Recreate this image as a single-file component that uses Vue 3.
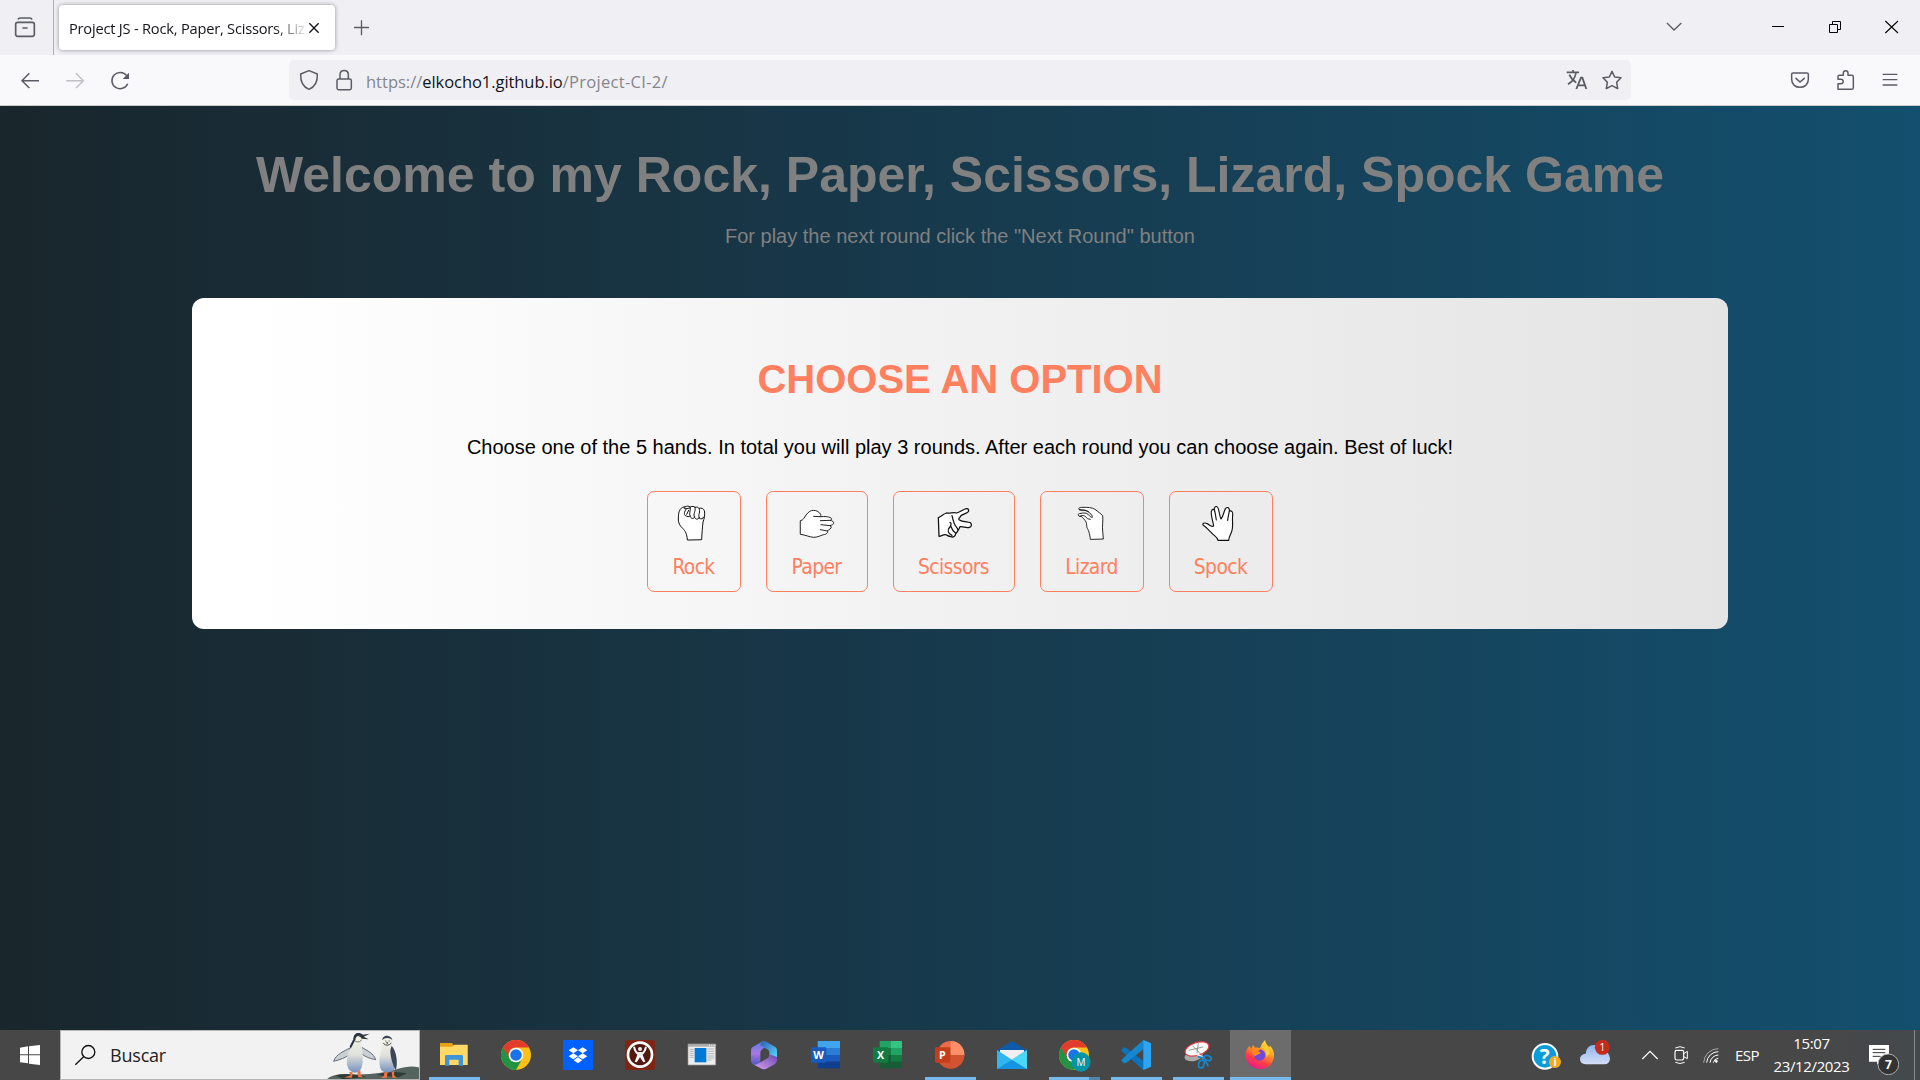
<script setup>
const hands = [
  {
    name: 'Rock', width: 94, box: '132 69 120 120', stroke: 3,
    shape: 'M172 179C171 162 166 153 158 145C149 137 145 129 145 117C145 103 146 95 151 88C155 82 161 80 165 81C170 77 177 78 181 81C187 78 192 79 195 82C200 80 205 82 207 85C214 83 221 86 223 92C226 104 222 118 219 126C217 142 216 160 215 178Z',
    lines: 'M165 81C158 83 161 87 169 86C163 96 161 102 166 107C172 109 177 112 181 109M181 81C182 95 176 100 181 110C184 117 192 117 194 111M195 82C198 98 188 99 194 113C199 120 206 118 208 112M207 85C213 96 203 103 208 115C213 118 219 117 221 111M169 86L179 84M176 91L170 103',
  },
  {
    name: 'Paper', width: 102, box: '501 69 120 120', stroke: 2.8,
    shape: 'M512 122C520 121 523 113 528 105C535 96 542 91 550 91C560 91 568 96 572 103C574 107 569 109 571 110C583 109 596 110 601 113C607 115 606 119 601 121C607 122 612 126 611 130C610 134 605 135 600 137C605 139 605 143 600 147C596 150 591 152 592 153C596 157 589 163 581 164C570 167 563 172 551 172C538 171 527 165 512 163Z',
    lines: 'M571 110L551 109M601 121L571 122M600 137L573 134M592 153L571 149',
  },
  {
    name: 'Scissors', width: 122, box: '27 9 120 120', stroke: 3.8,
    shape: 'M40 53C50 50 54 42 64 39C76 40 88 36 95 39C108 35 115 28 124 26C130 25 132 30 130 35C124 42 114 41 107 48C105 54 99 55 102 59C112 66 126 65 136 68C141 72 140 81 133 82C123 85 116 79 105 80C101 88 99 96 92 101C91 109 85 113 78 110C68 109 66 104 61 104C54 103 50 109 42 109Z',
    lines: 'M75 67C79 68 79 74 76 79C72 84 67 88 70 96C73 102 77 104 81 106M77 78C80 86 84 94 92 100M81 47C84 57 85 68 91 77C96 82 98 87 99 90',
  },
  {
    name: 'Lizard', width: 104, box: '366 69 120 120', stroke: 2.7,
    shape: 'M421 177C419 159 415 150 411 143C409 133 411 128 405 121C398 114 397 108 389 109C383 107 383 102 388 101C402 98 409 98 415 104C421 109 423 113 427 112C428 103 414 94 405 91C398 90 394 92 388 89C384 84 388 82 399 82C413 82 425 82 435 88C444 95 452 101 458 107C460 120 456 139 458 153L460 176Z',
    lines: 'M389 109C401 103 406 108 412 116L421 118M388 89C397 89 409 91 415 94',
  },
  {
    name: 'Spock', width: 104, box: '753 69 120 120', stroke: 3.4,
    shape: 'M804 181C802 171 794 168 786 160C779 153 772 144 760 136C755 130 764 128 769 130C778 132 782 143 791 138C789 125 782 105 784 94C786 87 792 86 794 93C791 84 795 78 801 80C808 83 807 107 813 117C821 108 822 91 827 85C832 80 839 83 838 93C846 91 849 97 848 105C846 120 850 137 846 151C844 161 837 168 836 181Z',
    lines: 'M794 93C797 103 797 111 799 120M838 93C836 104 834 112 833 121',
  },
]
</script>

<template>
  <div class="screen">
    <div class="tabbar">
      <div class="recent">
        <svg width="53" height="55" viewBox="0 0 159 165"><g fill="none" stroke="#5b5b66" stroke-width="5" stroke-linecap="round" stroke-linejoin="round"><path d="M55 57Q56 54 60 54H90Q94 54 95 57" /><rect x="47" y="67" width="56" height="42" rx="6" /><path d="M69 84h12" /></g></svg>
      </div>
      <div class="tab">
        <span class="tab-title">Project JS - Rock, Paper, Scissors, Liz</span>
        <svg class="tab-close" width="12" height="12" viewBox="0 0 36 36"><path d="M4 4L32 32M32 4L4 32" stroke="#15141a" stroke-width="4" /></svg>
      </div>
      <svg class="plus" width="16" height="16" viewBox="0 0 48 48"><path d="M22.500 1V46M0 22.500H45" stroke="#5b5b66" stroke-width="4" /></svg>
      <svg class="window" width="260" height="55" viewBox="360 0 780 165" fill="none">
        <path d="M381 69L402 90L424 69" stroke="#5b5b66" stroke-width="4" />
        <g stroke="#000" stroke-width="3"><path d="M696 79.5H732" /><path d="M868.500 73.500h24v24h-24zM877.500 73V64.500H901.500V88.500H893" /><path d="M1036 63L1074 99M1074 63L1036 99" stroke-width="3.200" /></g>
      </svg>
    </div>

    <div class="toolbar">
      <svg class="nav" width="150" height="50" viewBox="0 165 450 150" fill="none" stroke="#5b5b66" stroke-width="4.500">
        <path d="M117 242H67M88 220L66 242L88 264" />
        <path d="M199 242H249M228 220L250 242L228 264" stroke="#bfbfc5" />
        <path d="M383 251A24.500 24.500 0 1 1 380 227" /><path d="M387 218V237H368Z" fill="#5b5b66" stroke="none" />
      </svg>
      <div class="urlbar">
        <svg width="76" height="40" viewBox="867 180 228 120" fill="none" stroke="#5b5b66" stroke-width="4.500" stroke-linejoin="round">
          <path d="M927 212L952 222C953 244 947 260 927 268C907 260 901 244 902 222Z" />
          <rect x="1011" y="237" width="43" height="32" rx="5" /><path d="M1020 237V224C1020 207 1045 207 1045 224V237" />
        </svg>
        <span class="url">https://<b>elkocho1.github.io</b><i>/Project-CI-2/</i></span>
        <svg class="url-actions" width="71" height="40" viewBox="60 180 213 120" fill="none" stroke="#5b5b66" stroke-width="5">
          <path d="M80 217H117M99 210V217M108 218C106 233 97 245 84 253M88 224C93 236 101 243 109 248" />
          <path d="M109 267L123 233H127L139 267M114 256H134" stroke-width="5.500" />
          <path d="M216 214L224 231L243 233L230 247L233 266L216 257L199 266L202 247L189 233L208 231Z" stroke-linejoin="round" stroke-width="4.500" />
        </svg>
      </div>
      <svg class="menu" width="150" height="50" viewBox="690 165 450 150" fill="none" stroke="#5b5b66" stroke-width="4.500">
        <path d="M759 219H801Q805 219 805 223V238C805 254 793 262 780 262C767 262 755 254 755 238V223Q755 219 759 219Z" /><path d="M768 235L780 246L793 235" stroke-linecap="round" />
        <path d="M894 268V251H902C912 251 912 238 902 238H894V230Q894 226 898 226H910V219C910 210 924 210 924 219V226H935Q940 226 940 231V263Q940 268 935 268Z" stroke-linejoin="round" />
        <path d="M1028 223H1072M1028 239H1072M1028 255H1072" stroke-width="4" />
      </svg>
    </div>

    <main class="page">
      <h1>Welcome to my Rock, Paper, Scissors, Lizard, Spock Game</h1>
      <p class="sub">For play the next round click the "Next Round" button</p>
      <section class="card">
        <h2>CHOOSE AN OPTION</h2>
        <p>Choose one of the 5 hands. In total you will play 3 rounds. After each round you can choose again. Best of luck!</p>
        <div class="options">
          <button v-for="h in hands" :key="h.name" :style="{ width: h.width + 'px' }">
            <svg width="40" height="40" :viewBox="h.box" stroke="#111" :stroke-width="h.stroke" stroke-linejoin="round" stroke-linecap="round">
              <path :d="h.shape" fill="#fff" /><path :d="h.lines" fill="none" />
            </svg>
            <span>{{ h.name }}</span>
          </button>
        </div>
      </section>
    </main>

    <footer class="taskbar">
      <div class="start"><svg width="20" height="20" viewBox="60 75 60 60" fill="#fff"><path d="M60 83L84 79V103H60ZM87 79L120 75V103H87ZM60 106H84V130L60 127ZM87 106H120V135L87 131Z" /></svg></div>
      <div class="search">
        <svg width="50" height="48" viewBox="183 33 150 144" fill="none" stroke="#111" stroke-width="4"><circle cx="265" cy="96" r="19.500" /><path d="M251 110L226 134" /></svg>
        <span>Buscar</span>
        <svg class="penguins" width="94" height="48" viewBox="975 33 282 144">
          <defs><linearGradient id="belly" x1="0" x2="0" y1="0" y2="1"><stop offset="0" stop-color="#f7f6e8" /><stop offset=".55" stop-color="#dfe1dc" /><stop offset="1" stop-color="#7590bd" /></linearGradient></defs>
          <path d="M979 180C990 166 1020 160 1050 163C1110 166 1150 158 1190 148C1220 138 1240 137 1260 143V180Z" fill="#56645f" />
          <path d="M1005 166C1035 160 1075 162 1098 171L1030 178ZM1130 165L1170 154L1222 160L1195 172Z" fill="#303b38" />
          <path d="M1049 84C1035 93 1007 102 1001 124C1018 120 1037 113 1048 104ZM1085 82C1102 92 1121 100 1127 119C1110 116 1093 110 1084 100Z" fill="#c9cfd2" stroke="#4a586c" stroke-width="2.500" />
          <path d="M1060 52C1064 36 1084 37 1090 46L1108 41L1092 51L1106 58L1086 60C1082 77 1088 82 1088 105C1089 134 1087 157 1064 158C1044 154 1040 139 1041 120C1041 90 1058 80 1058 60Z" fill="url(#belly)" />
          <path d="M1060 58C1060 35 1080 36 1089 44L1109 41L1091 50L1106 58L1085 56C1078 43 1067 47 1066 60L1052 86L1049 79Z" fill="#2c3442" /><circle cx="1078" cy="48" r="2.500" fill="#a44" /><path d="M1066 64C1075 68 1083 65 1084 59" fill="none" stroke="#444" stroke-width="2" />
          <path d="M1148 62C1144 43 1176 42 1177 60L1177 79C1188 99 1196 122 1184 146C1180 158 1156 162 1144 151C1134 132 1139 104 1145 83Z" fill="url(#belly)" />
          <path d="M1147 61C1146 42 1175 43 1177 61C1169 52 1154 52 1147 61ZM1175 77C1191 95 1193 130 1188 151C1177 134 1171 109 1171 90Z" fill="#3d4659" /><path d="M1150 70Q1162 82 1174 69M1156 63h3M1166 63h3" fill="none" stroke="#444" stroke-width="3" /><path d="M1158 67h7l-3 6z" fill="#333" />
          <path d="M1047 155L1052 166L1032 173H1056L1058 157ZM1072 156L1075 172H1089L1082 165L1081 151ZM1153 156L1152 167L1144 174H1160L1163 157ZM1175 156L1177 173H1190L1182 165L1183 152Z" fill="#f2703c" />
        </svg>
      </div>

      <div class="apps">
        <div class="app open"><svg width="30" height="30" viewBox="57 60 90 90"><path d="M60 69H96L101 76H142V135H60Z" fill="#e6a117" /><path d="M60 80H97L103 74H143V135H60Z" fill="#ffd866" /><path d="M75 137V109Q75 105 79 105H125Q129 105 129 109V137H116V119H88V137Z" fill="#3f94d8" /></svg></div>
        <div class="app"><svg width="30" height="30" viewBox="0 0 90 90"><circle cx="45" cy="45" r="45" fill="#fbc116" /><path d="M6 22.500A45 45 0 0 0 45 90L64 56L45 45Z" fill="#229342" /><path d="M6 22.500L26 56A22 22 0 0 1 45 22.500H84A45 45 0 0 0 6 22.500Z" fill="#e33b2e" /><circle cx="45" cy="45" r="22" fill="#fff" /><circle cx="45" cy="45" r="17.500" fill="#1a73e8" /></svg></div>
        <div class="app"><svg width="30" height="30" viewBox="429 60 90 90"><path d="M429 60h90v90h-90z" fill="#0061ff" /><path d="M460 82L474 91L460 100L446 91ZM488 82L502 91L488 100L474 91ZM460 100L474 109L460 118L446 109ZM488 100L502 109L488 118L474 109ZM474 112L487 121L474 130L461 121Z" fill="#fff" /></svg></div>
        <div class="app"><svg width="30" height="30" viewBox="615 60 90 90"><rect x="615" y="60" width="90" height="90" rx="9" fill="#7e2613" /><circle cx="660" cy="104" r="36" fill="#511a10" stroke="#fff" stroke-width="8" /><circle cx="660" cy="87" r="6" fill="#eee" /><path d="M642 80Q646 98 656 102L647 126M678 80Q674 98 664 102L673 126M657 102L672 124M663 102L648 124" fill="none" stroke="#fff" stroke-width="6" /><path d="M654 96h12v12h-12z" fill="#eee" /></svg></div>
        <div class="app"><svg width="30" height="30" viewBox="801 60 90 90"><path d="M804 72h83v63h-83z" fill="#ededed" stroke="#999" stroke-width="2" /><path d="M804 72h83v8h-83z" fill="#aaa" /><path d="M824 84h35v43h-35z" fill="#0078d7" /><path d="M809 88h12M809 94h12M809 100h12M809 106h12M809 112h12M862 87h21M862 94h21M862 101h21M862 108h21M862 114h21M862 120h12" stroke="#aaa" stroke-width="2.500" /><path d="M867 76h3M874 76h3M881 76h3" stroke="#fff" stroke-width="3" /></svg></div>
        <div class="app"><svg width="30" height="30" viewBox="987 60 90 90"><defs><linearGradient id="m1" x1="0" y1="0" x2="0" y2="1"><stop offset="0" stop-color="#5a7fe8" /><stop offset=".5" stop-color="#a778e2" /><stop offset="1" stop-color="#4f58bd" /></linearGradient><linearGradient id="m2" x1="0" y1="0" x2="1" y2="1"><stop offset="0" stop-color="#2b5bb6" /><stop offset="1" stop-color="#5ce0ff" /></linearGradient><linearGradient id="m3" x1="0" y1="1" x2="1" y2="0"><stop offset="0" stop-color="#dba0ef" /><stop offset="1" stop-color="#6746b1" /></linearGradient></defs><path d="M1030 63L998 81Q993 84 993 91V122Q993 130 1000 134L1007 137L1021 130V98Q1021 90 1028 86L1048 75Z" fill="url(#m1)" /><path d="M1030 63Q1035 62 1040 66L1066 81Q1071 85 1071 91V119L1048 107V96Q1048 92 1044 89L1022 77Q1018 70 1030 63Z" fill="url(#m2)" /><path d="M1071 111V121Q1071 128 1065 132L1039 146Q1032 149 1025 146L1002 134Q1009 136 1018 129L1043 114Q1048 111 1048 103Z" fill="url(#m3)" /></svg></div>
        <div class="app"><svg width="30" height="30" viewBox="1173 60 90 90"><path d="M1193 63h67v21h-67z" fill="#41a5ee" /><path d="M1193 84h67v21h-67z" fill="#2b7cd3" /><path d="M1193 105h67v20h-67z" fill="#185abd" /><path d="M1193 125h67v20h-67z" fill="#103f91" /><rect x="1173" y="82" width="46" height="46" rx="4" fill="#185abd" /><text x="1195.500" y="117" text-anchor="middle" textLength="32" lengthAdjust="spacingAndGlyphs">W</text></svg></div>
        <div class="app"><svg width="30" height="30" viewBox="69 60 90 90"><path d="M89 63h34v42H89z" fill="#21a366" /><path d="M123 63h33v21h-33z" fill="#33c481" /><path d="M123 84h33v21h-33z" fill="#21a366" /><path d="M89 84h34v21H89z" fill="#107c41" /><path d="M89 105h67v40H89z" fill="#185c37" /><path d="M123 105h33v20h-33z" fill="#107c41" /><rect x="69" y="82" width="46" height="46" rx="4" fill="#107c41" /><text x="92" y="117" text-anchor="middle">X</text></svg></div>
        <div class="app open"><svg width="30" height="30" viewBox="255 60 90 90"><circle cx="302" cy="104" r="41" fill="#ed6c47" /><path d="M302 63A41 41 0 0 1 343 105H302Z" fill="#ff8f6b" /><path d="M343 105A41 41 0 0 1 261 105Z" fill="#d35230" /><rect x="255" y="82" width="46" height="46" rx="4" fill="#c43e1c" /><text x="277" y="117" text-anchor="middle">P</text></svg></div>
        <div class="app"><svg width="30" height="30" viewBox="441 60 90 90"><path d="M441 90L486 64L531 90V110H441Z" fill="#0d5ba8" /><path d="M450 90H522V115L486 130L450 112Z" fill="#f0f0f2" /><path d="M441 147V90L486 119L531 90V147Z" fill="#31b7ef" /><path d="M441 147L486 119L531 147Z" fill="#1594e2" /><path d="M486 119L531 90V147Z" fill="#4bd7f8" /></svg></div>
        <div class="app open multi"><svg width="33" height="33" viewBox="0 0 99 99"><circle cx="45" cy="45" r="45" fill="#fbc116" /><path d="M6 22.500A45 45 0 0 0 45 90L64 56L45 45Z" fill="#229342" /><path d="M6 22.500L26 56A22 22 0 0 1 45 22.500H84A45 45 0 0 0 6 22.500Z" fill="#e33b2e" /><circle cx="45" cy="45" r="22" fill="#fff" /><circle cx="45" cy="45" r="17.500" fill="#1a73e8" /><circle cx="66" cy="66" r="29" fill="#0494a5" /><text class="thin" x="66" y="77" text-anchor="middle">M</text></svg></div>
        <div class="app open"><svg width="30" height="30" viewBox="813 60 90 90"><path d="M880 60L903 70V140L880 150L816 94Q813 91 816 88L820 83Q824 80 828 83L880 123Z" fill="#0d72bd" /><path d="M880 60L816 118Q813 121 816 124L821 129Q825 131 829 128L880 88Z" fill="#1687cf" /><path d="M880 60L903 70V140L880 150Z" fill="#2da5f4" /></svg></div>
        <div class="app open"><svg width="30" height="30" viewBox="999 60 90 90"><ellipse cx="1031" cy="108" rx="28" ry="15" fill="#aaa" transform="rotate(-12 1031 108)" /><ellipse cx="1041" cy="87" rx="37" ry="19" transform="rotate(-18 1041 87)" fill="#f8f8f8" stroke="#e33a40" stroke-width="3.500" /><path d="M1045 68L1041 100M1016 91L1059 81M1027 77L1054 104" stroke="#888" stroke-width="2.500" /><path d="M1038 101L1064 116" stroke="#eee" stroke-width="6" /><g fill="none" stroke="#1687cb" stroke-width="5"><ellipse cx="1073" cy="114" rx="11" ry="7" transform="rotate(15 1073 114)" /><ellipse cx="1054" cy="132" rx="8" ry="12" transform="rotate(15 1054 132)" /><path d="M1043 110L1062 114L1075 139" /></g></svg></div>
        <div class="app open active"><svg width="30" height="30" viewBox="1185 60 90 90"><defs><linearGradient id="ff" x1=".8" y1="0" x2=".3" y2="1"><stop offset="0" stop-color="#fff23f" /><stop offset=".4" stop-color="#ff9a1f" /><stop offset=".7" stop-color="#ff3e47" /><stop offset="1" stop-color="#e5188e" /></linearGradient></defs><path d="M1198 78L1204 86L1209 75L1215 83Q1224 82 1230 85Q1233 72 1245 60Q1247 73 1258 81L1260 77Q1272 89 1272 105C1272 131 1254 147 1230 147C1205 147 1187 129 1187 105C1187 93 1192 85 1198 78Z" fill="url(#ff)" /><circle cx="1229" cy="105" r="17" fill="#7148db" /><path d="M1207 91Q1215 82 1230 87L1225 95Q1235 96 1230 101Q1220 104 1216 108Q1204 103 1207 91Z" fill="#ff8a1b" /><path d="M1235 82Q1250 92 1249 111L1260 101L1250 78Z" fill="#ffca32" /></svg></div>
      </div>

      <div class="tray">
        <svg width="50" height="50" viewBox="75 30 150 150"><circle cx="135" cy="109" r="37" fill="#0e9cd8" stroke="#fff" stroke-width="6" /><text x="134" y="132" text-anchor="middle" font-size="62">?</text><circle cx="165" cy="126" r="18" fill="#f5ab1d" /><text x="165" y="137" text-anchor="middle" font-size="30">i</text></svg>
        <svg width="65" height="50" viewBox="225 30 195 150"><defs><linearGradient id="cl" x1="0" y1="0" x2="0" y2="1"><stop offset="0" stop-color="#8db5ef" /><stop offset="1" stop-color="#d5def6" /></linearGradient></defs><path d="M257 133Q240 132 240 117Q240 103 257 101Q260 75 282 75Q300 75 306 94Q330 95 330 116Q329 132 313 133Z" fill="url(#cl)" /><circle cx="307" cy="82" r="22.500" fill="#c42b1c" /><text class="thin" x="307" y="92" text-anchor="middle">1</text></svg>
        <svg width="92" height="50" viewBox="420 30 276 150" fill="none" stroke="#fff" stroke-width="3.500"><path d="M427 117L450 94L473 117" /><rect x="525" y="91" width="26" height="29" rx="5" /><path d="M551 101L562 94V116L551 110M526 84Q540 76 554 84M526 127Q540 134 554 127" stroke-width="3" /><g stroke-width="3"><path d="M611 128A44 44 0 0 1 655 86" stroke="#aaa" /><path d="M620 128A35 35 0 0 1 655 95M630 128A26 26 0 0 1 655 105M640 128A16 16 0 0 1 655 115" /><circle cx="649" cy="124" r="3" fill="#fff" /></g></svg>
        <span class="lang">ESP</span>
        <div class="clock"><span>15:07</span><span>23/12/2023</span></div>
        <svg width="60" height="50" viewBox="1062 30 180 150"><path d="M1107 75h60v50h-26l-10 9v-9h-24z" fill="#fff" /><path d="M1118 88h38M1118 98h38M1118 109h24" stroke="#333" stroke-width="3" /><circle cx="1165" cy="133" r="31" fill="#333" stroke="#aaa" stroke-width="3" /><text x="1165" y="146" text-anchor="middle" font-size="36">7</text></svg>
        <div class="peek"></div>
      </div>
    </footer>
  </div>
</template>

<style>
body { margin: 0; overflow: hidden; }
</style>
<style scoped>
.screen { width: 1920px; height: 1080px; display: flex; flex-direction: column; font-family: "Open Sans", "Noto Sans", sans-serif; }
svg { display: block; flex: none; }
svg text { font-family: "Open Sans", sans-serif; font-weight: 700; fill: #fff; }
.app text { font-size: 32px; }
svg text.thin { font-weight: 400; font-size: 30px; }

.tabbar { height: 55px; background: #f0f0f4; display: flex; align-items: center; flex: none; }
.recent { width: 53px; height: 55px; border-right: 1px solid #aeaeb4; }
.tab { margin-left: 5px; width: 276px; height: 45px; box-sizing: border-box; padding: 1px 15px 0 10px; background: #fff; border-radius: 4px; box-shadow: 0 0 4px rgba(0, 0, 0, .4); display: flex; align-items: center; justify-content: space-between; }
.tab-title { width: 237px; overflow: hidden; white-space: nowrap; font-size: 14.67px; letter-spacing: -.22px; line-height: 24px; color: #15141a; -webkit-mask-image: linear-gradient(to right, #000 205px, transparent 240px); mask-image: linear-gradient(to right, #000 205px, transparent 240px); }
.plus { margin-left: 19px; }
.window { margin-left: auto; }

.toolbar { height: 50px; background: #f9f9fb; border-bottom: 1px solid #ccc; display: flex; align-items: center; flex: none; }
.urlbar { margin-left: 139px; width: 1342px; height: 40px; border-radius: 5px; background: #f0f0f4; display: flex; align-items: center; }
.url { font-size: 16.5px; line-height: 40px; padding: 3px 0 0 1px; color: #85858c; white-space: nowrap; }
.url b { font-weight: 400; color: #15141a; letter-spacing: -.06px; }
.url i { font-style: normal; letter-spacing: .3px; }
.url-actions { margin-left: auto; }
.menu { margin-left: auto; }

.page { height: 924px; flex: none; background: linear-gradient(to right, #19262c, #173a4d 50%, #134f6e); display: flex; flex-direction: column; align-items: center; font-family: "Liberation Sans", Arial, sans-serif; }
h1 { margin: 41px 0 21px; font-size: 50px; line-height: 57px; color: #808080; white-space: nowrap; }
p { margin: 0; font-size: 20px; line-height: 23px; }
.sub { color: #808080; }
.card { margin-top: 50px; width: 1536px; height: 331px; border-radius: 12px; background: linear-gradient(to right, #fff 4%, #f2f2f2 47%, #e4e4e4); display: flex; flex-direction: column; align-items: center; }
h2 { margin: 58px 0 34px; font-size: 40px; line-height: 46px; color: #ff7f5f; }
.card p { color: #000; }
.options { margin-top: 32px; display: flex; gap: 25px; }
button { height: 101px; box-sizing: border-box; padding: 11px 0 0; border: 1px solid #ff7f5f; border-radius: 7px; background: none; display: flex; flex-direction: column; align-items: center; color: #ff7f5f; }
button span { margin: 12px 1px 0 0; font: 20.8px/24px "DejaVu Sans Condensed", "DejaVu Sans", sans-serif; letter-spacing: -.6px; }

.taskbar { height: 50px; flex: none; background: linear-gradient(to right, #474747 94%, #43494d); display: flex; }
.start { width: 60px; display: flex; align-items: center; justify-content: center; }
.search { width: 360px; height: 50px; box-sizing: border-box; border: 1px solid #b5b5b5; background: #f2f2f2; display: flex; align-items: center; }
.search span { font-size: 18px; letter-spacing: -.2px; color: #222; margin-left: -1px; }
.penguins { margin-left: auto; }
.apps { display: flex; margin-left: 4px; gap: 1px; }
.app { width: 61px; height: 50px; box-sizing: border-box; padding: 10px 0 0 15px; }
.open { background: linear-gradient(#76b9ed, #76b9ed) 5px 100% / 51px 3px no-repeat; }
.multi { background: linear-gradient(to right, #76b9ed 40px, #5683a8 40px) 5px 100% / 51px 3px no-repeat; }
.active { background: linear-gradient(#76b9ed, #76b9ed) 0 100% / 61px 3px no-repeat #6c6c6c; }
.tray { margin-left: auto; display: flex; align-items: center; color: #fff; }
.lang { width: 42px; text-align: center; font-size: 15px; letter-spacing: -.5px; margin-left: -6px; }
.clock { width: 87px; margin-right: -1px; display: flex; flex-direction: column; align-items: center; font-size: 15px; line-height: 23px; letter-spacing: -.35px; }
.peek { width: 5px; height: 50px; border-left: 1px solid #888; }
</style>
